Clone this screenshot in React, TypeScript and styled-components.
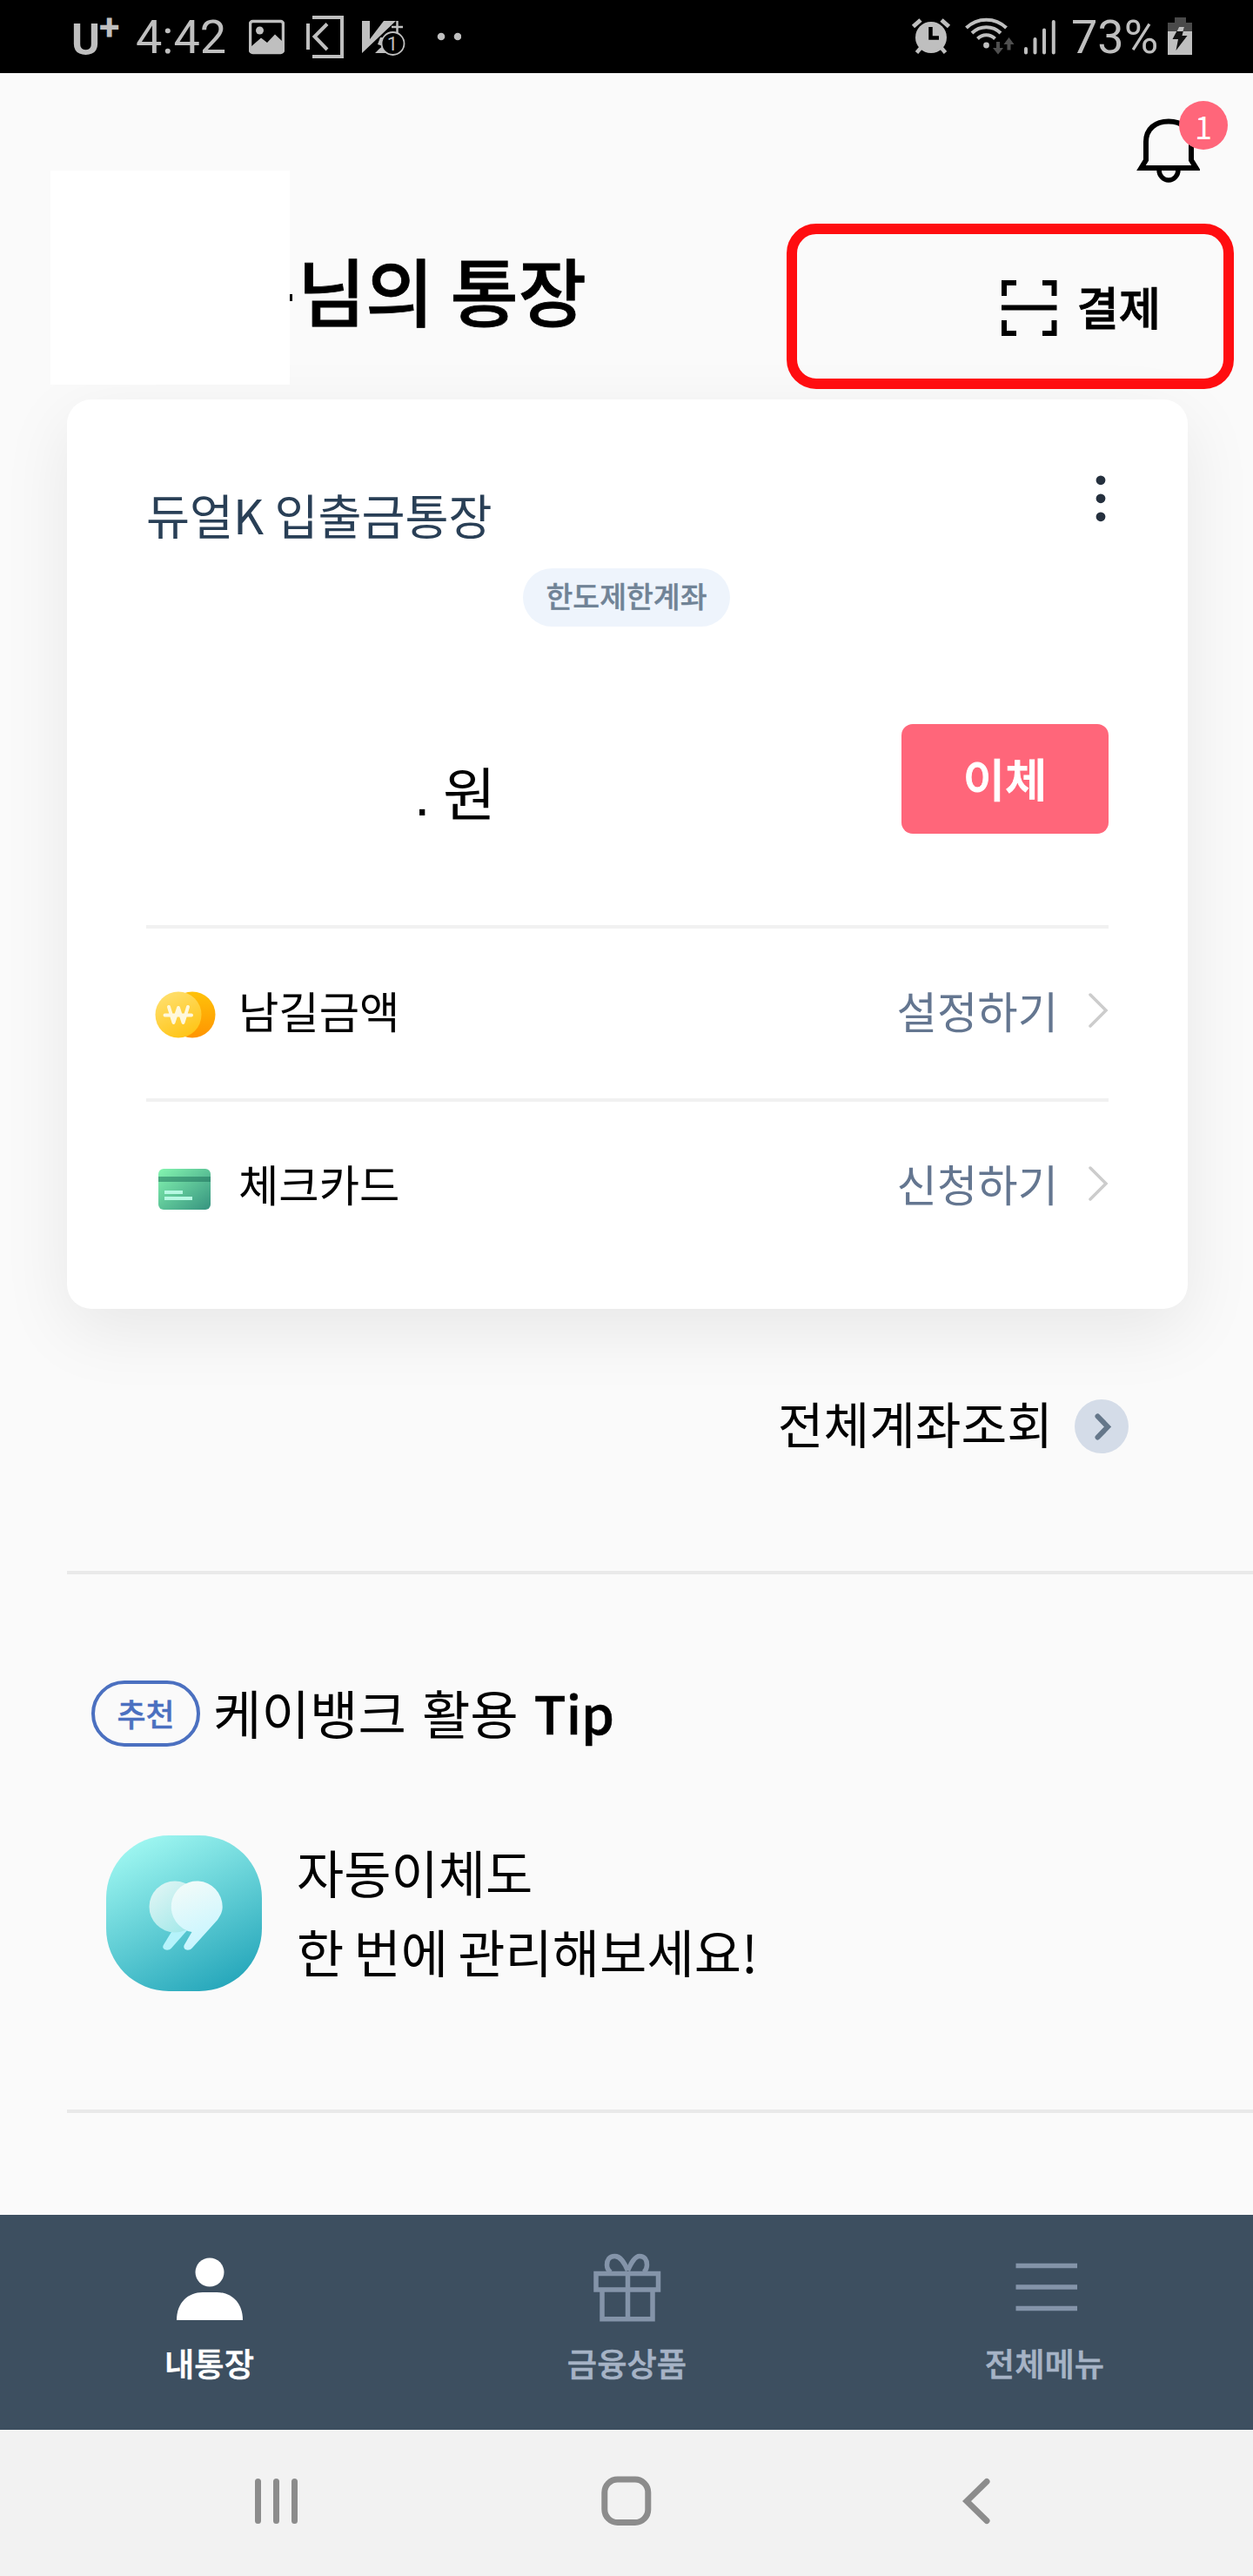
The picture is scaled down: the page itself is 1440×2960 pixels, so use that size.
import React from 'react';
import styled, { createGlobalStyle } from 'styled-components';

const GlobalStyle = createGlobalStyle`
  *, *::before, *::after { box-sizing: border-box; }
  body { margin: 0; background: #fafafa; }
  svg { display: block; flex: none; }
`;

const Screen = styled.div`
  display: flex;
  flex-direction: column;
  width: 1440px;
  height: 2960px;
  overflow: hidden;
  background: #fafafa;
  color: #000;
  font-family: 'Noto Sans CJK KR', 'Noto Sans', sans-serif;
  white-space: nowrap;
`;

/* ---------- Status bar ---------- */

const StatusBar = styled.header`
  display: flex;
  justify-content: space-between;
  height: 84px;
  flex: none;
  padding: 0 70px 0 85px;
  background: #000;
  color: #bfbfbf;
  font-family: Roboto, sans-serif;
`;

const StatusGroup = styled.div`
  display: flex;
  align-items: flex-start;
`;

const Carrier = styled.span`
  width: 74px;
  margin-left: -3px;
  font-size: 50px;
  font-weight: 700;
  line-height: 92px;
`;

const CarrierPlus = styled.sup`
  margin-left: -1px;
  font-size: 43px;
  line-height: 0;
  vertical-align: 17px;
`;

const StatusText = styled.span<{ $width: number }>`
  width: ${(p) => p.$width}px;
  font-size: 54px;
  line-height: 86px;
`;

const StatusIcon = styled.svg<{ $gap?: number }>`
  height: 84px;
  margin-left: ${(p) => p.$gap ?? 0}px;
`;

/* ---------- Header ---------- */

const Header = styled.section`
  position: relative;
  z-index: 1;
  flex: none;
  height: 375px;
`;

const AlertRow = styled.div`
  display: flex;
  justify-content: flex-end;
  height: 180px;
  padding: 52px 61px 0 0;
`;

const AlertButton = styled.button`
  position: relative;
  width: 73px;
  height: 75px;
  padding: 0;
  border: 0;
  background: none;
`;

const AlertCount = styled.span`
  position: absolute;
  top: -20px;
  left: 49px;
  width: 56px;
  height: 56px;
  border-radius: 50%;
  background: #ff667a;
  color: #fff;
  font: 400 36px/56px 'Noto Sans CJK KR', sans-serif;
  text-align: center;
`;

const TitleRow = styled.div`
  display: flex;
  justify-content: space-between;
  padding: 0 106px 0 333px;
`;

const OwnerTitle = styled.h1`
  display: flex;
  margin: 0;
  padding-top: 8px;
  font-size: 85px;
  font-weight: 500;
  line-height: 120px;
  -webkit-text-stroke: 0.8px currentColor;
`;

const NameEdge = styled.span`
  width: 3px;
  height: 8px;
  margin: 66px 6px 0 0;
  background: #000;
`;

const NameMask = styled.div`
  position: absolute;
  top: 112px;
  left: 58px;
  width: 275px;
  height: 246px;
  background: #fff;
`;

const PayButton = styled.button`
  display: flex;
  gap: 22px;
  padding: 58px 0 0;
  border: 0;
  background: none;
  color: #000;
  font: 500 52.5px/59px 'Noto Sans CJK KR', sans-serif;
  -webkit-text-stroke: 0.8px currentColor;
`;

const Highlight = styled.div`
  position: absolute;
  top: 173px;
  left: 904px;
  width: 514px;
  height: 190px;
  border: 12px solid #ff0d10;
  border-radius: 34px;
`;

/* ---------- Account card ---------- */

const AccountCard = styled.section`
  display: flex;
  flex-direction: column;
  flex: none;
  height: 1045px;
  margin: 0 75px 0 77px;
  padding: 87px 91px 0;
  border-radius: 28px;
  background: #fff;
  box-shadow: 0 24px 80px rgba(0, 0, 0, 0.08);
`;

const AccountTop = styled.div`
  display: flex;
  justify-content: space-between;
  height: 107px;
  padding: 0 3px 0 0;
`;

const AccountName = styled.h2`
  margin: 5px 0 0;
  color: #293f56;
  font-size: 54.4px;
  font-weight: 400;
  line-height: 80px;
`;

const LimitTag = styled.span`
  align-self: center;
  width: 238px;
  height: 67px;
  margin-right: 2px;
  border-radius: 34px;
  background: #eef4fc;
  color: #708396;
  font-size: 33.5px;
  font-weight: 500;
  line-height: 62px;
  text-align: center;
  -webkit-text-stroke: 0.4px currentColor;
`;

const BalanceRow = styled.div`
  display: flex;
  justify-content: space-between;
  height: 231px;
  margin-top: 112px;
`;

const Balance = styled.p`
  margin: 31px 0 0 308px;
  font-size: 66px;
  line-height: 90px;
`;

const Period = styled.span`
  display: inline-block;
  width: 33px;
  font-family: 'Liberation Sans', sans-serif;
`;

const TransferButton = styled.button`
  width: 238px;
  height: 126px;
  padding: 0 0 5px;
  border: 0;
  border-radius: 13px;
  background: #ff667a;
  color: #fff;
  font: 500 52.5px/60px 'Noto Sans CJK KR', sans-serif;
  -webkit-text-stroke: 1px currentColor;
`;

const ServiceRow = styled.div`
  display: flex;
  align-items: center;
  flex: none;
  height: 199px;
  border-top: 4px solid #f1f1f1;
`;

const ServiceIcon = styled.span`
  display: flex;
  width: 106px;
  padding: 2px 0 0 10px;
`;

const ServiceName = styled.span`
  flex: 1;
  padding-bottom: 8px;
  font-size: 50.4px;
  line-height: 80px;
`;

const ServiceAction = styled.span`
  display: flex;
  align-items: center;
  gap: 34px;
  padding-bottom: 8px;
  color: #647690;
  font-size: 50.4px;
  line-height: 80px;
`;

const AllAccounts = styled.div`
  display: flex;
  justify-content: flex-end;
  align-items: center;
  gap: 25px;
  flex: none;
  height: 301px;
  padding: 0 143px 31px 0;
  font-size: 57.3px;
  line-height: 80px;
`;

const AllAccountsLabel = styled.span`
  padding-bottom: 8px;
`;

/* ---------- Tip section ---------- */

const TipSection = styled.section`
  flex: none;
  height: 623px;
  margin-left: 77px;
  padding: 122px 0 0 28px;
  border: solid #e9e9e9;
  border-width: 4px 0;
`;

const TipHeading = styled.h3`
  display: flex;
  align-items: center;
  height: 76px;
  margin: 0;
  font-size: 60.3px;
  font-weight: 400;
  line-height: 76px;
`;

const TipTitle = styled.span`
  padding-bottom: 4px;
  word-spacing: 4.5px;
`;

const TipBadge = styled.span`
  width: 125px;
  height: 76px;
  margin-right: 15px;
  border: 4px solid #4b70c0;
  border-radius: 38px;
  color: #4b70c0;
  font-size: 36px;
  font-weight: 500;
  line-height: 66px;
  text-align: center;
  -webkit-text-stroke: 0.4px currentColor;
`;

const TipWord = styled.b`
  font-weight: 500;
  -webkit-text-stroke: 0.6px currentColor;
`;

const TipItem = styled.div`
  display: flex;
  gap: 40px;
  padding: 102px 0 0 17px;
`;

const TipText = styled.p`
  margin: -4px 0 0;
  font-size: 59px;
  line-height: 91px;
  word-spacing: -2px;
`;

const Rest = styled.div`
  flex: 1;
`;

/* ---------- Bottom bars ---------- */

const TabBar = styled.nav`
  display: grid;
  grid-template-columns: repeat(3, 1fr);
  flex: none;
  height: 247px;
  background: #3d4f60;
`;

const Tab = styled.div<{ $active?: boolean }>`
  display: flex;
  flex-direction: column;
  align-items: center;
  padding: 40px 0 0 1px;
  color: ${(p) => (p.$active ? '#fff' : '#a6b3c6')};
  font-size: 37.3px;
  font-weight: 500;
  line-height: 56px;
  -webkit-text-stroke: 0.6px currentColor;
`;

const TabLabel = styled.span`
  margin-top: 12px;
`;

const SystemBar = styled.footer`
  display: flex;
  justify-content: space-between;
  align-items: center;
  flex: none;
  height: 168px;
  padding: 0 302px 4px 292px;
  background: #f2f2f2;
`;

const HomeKey = styled.span`
  margin-right: 8px;
`;

function StatusLeft() {
  return (
    <StatusGroup>
      <Carrier>
        U<CarrierPlus>+</CarrierPlus>
      </Carrier>
      <StatusText $width={130}>4:42</StatusText>
      <StatusIcon width="41" viewBox="286 0 41 84">
        <rect x="287.5" y="24.5" width="38" height="36" rx="3" fill="none" stroke="#bfbfbf" strokeWidth="3.5" />
        <circle cx="298.500" cy="35" r="4.500" fill="#bfbfbf" />
        <path d="M288 54 L300 43.500 L307 49 L316 39.500 L325 48 V60 H288Z" fill="#bfbfbf" />
      </StatusIcon>
      <StatusIcon $gap={25} width="43" viewBox="352 0 43 84">
        <path d="M354 27V57M376 27.500L361.500 42L376 57M359 20H393V65H359" fill="none" stroke="#bfbfbf" strokeWidth="4" />
      </StatusIcon>
      <StatusIcon $gap={21} width="50" viewBox="416 0 50 84">
        <path d="M416 24H425V45L441 24H455L416 61Z" fill="#bfbfbf" />
        <path d="M437 43H444V61H431L436 56L440 53L434 51Z" fill="#bfbfbf" />
        <path d="M456.500 24V38M450 31H463" stroke="#bfbfbf" strokeWidth="2.500" />
        <circle cx="451.500" cy="50" r="13" fill="#000" stroke="#bfbfbf" strokeWidth="1.800" />
        <text x="451" y="57.500" fontSize="22" textAnchor="middle" fill="#bfbfbf">1</text>
      </StatusIcon>
      <StatusIcon $gap={36} width="28" viewBox="502 0 28 84">
        <circle cx="507" cy="42" r="4.300" fill="#bfbfbf" />
        <circle cx="526" cy="42" r="4.300" fill="#bfbfbf" />
      </StatusIcon>
    </StatusGroup>
  );
}

function StatusRight() {
  return (
    <StatusGroup>
      <StatusIcon width="46" viewBox="1047 0 46 84">
        <path d="M1049.500 30.500L1058 23M1090.500 30.500L1082 23" stroke="#bfbfbf" strokeWidth="5" />
        <path d="M1053.500 60.500L1059 54M1086.500 60.500L1081 54" stroke="#bfbfbf" strokeWidth="4.500" />
        <circle cx="1070" cy="43" r="18" fill="#bfbfbf" />
        <path d="M1069.500 31V43.500H1079" fill="none" stroke="#000" strokeWidth="4.500" />
      </StatusIcon>
      <StatusIcon $gap={16} width="57" viewBox="1109 0 57 84">
        <g fill="none" stroke="#bfbfbf" strokeWidth="4">
          <path d="M1110.500 32A33 33 0 0 1 1156.500 32" />
          <path d="M1117 38A23.500 23.500 0 0 1 1150 38" />
          <path d="M1123.500 44.500A14 14 0 0 1 1143.500 44.500" />
        </g>
        <circle cx="1133.500" cy="52" r="3.400" fill="#bfbfbf" />
        <g fill="#4f4f4f">
          <path d="M1145 48H1149V55H1153L1147 62.500L1141 55H1145Z" />
          <path d="M1157.500 57.500H1161.500V51H1165.500L1159.500 43L1153.500 51H1157.500Z" />
        </g>
      </StatusIcon>
      <StatusIcon $gap={11} width="37" viewBox="1177 0 37 84">
        <path d="M1179 56V60.500M1189.500 45V60.500M1200 34.500V60.500M1210.800 25V60.500" stroke="#bfbfbf" strokeWidth="4" strokeLinecap="round" />
      </StatusIcon>
      <StatusIcon as="span" $gap={17} />
      <StatusText $width={111}>73%</StatusText>
      <StatusIcon width="28" viewBox="1342 0 28 84">
        <path d="M1350 20H1363V26H1370V36H1342V26H1350Z" fill="#4a4a4a" />
        <path d="M1342 36H1370V63H1342Z" fill="#bfbfbf" />
        <path d="M1355 31H1361L1358.500 41H1364.500L1351.500 58L1354 45H1347.500Z" fill="#111" />
        <path d="M1355 31H1361L1359.500 36H1352.500Z" fill="#bfbfbf" />
      </StatusIcon>
    </StatusGroup>
  );
}

function BellIcon() {
  return (
    <svg width="73" height="75" viewBox="1306 136 73 75" fill="none" stroke="#000" strokeWidth="6">
      <path d="M1317 163C1317 148 1328 139.500 1343 139.500S1369 148 1369 163V184L1374.500 193H1311.500L1317 184Z" />
      <path d="M1332 195A11 12 0 0 0 1354 195" strokeWidth="5.500" />
    </svg>
  );
}

function ScanIcon() {
  return (
    <svg width="64" height="64" viewBox="0 0 64 64" fill="none" stroke="#000" strokeWidth="6">
      <path d="M17 3H3V18M47 3H60.500V18M17 61H3V46M47 61H60.500V46M0 31.500H63.500" />
    </svg>
  );
}

function MoreIcon() {
  return (
    <svg width="12" height="54" viewBox="0 0 12 54" fill="#25303e">
      <circle cx="6" cy="5.800" r="5.400" />
      <circle cx="6" cy="26.800" r="5.400" />
      <circle cx="6" cy="47.800" r="5.400" />
    </svg>
  );
}

function CoinIcon() {
  return (
    <svg width="70" height="54" viewBox="0 0 70 54">
      <defs>
        <linearGradient id="coinBack" x1="0" y1="0" x2="0" y2="1">
          <stop offset="0" stopColor="#ffc20a" />
          <stop offset="1" stopColor="#ff9400" />
        </linearGradient>
        <linearGradient id="coinFront" x1="0.2" y1="0" x2="0.7" y2="1">
          <stop offset="0" stopColor="#ffe070" />
          <stop offset="1" stopColor="#ffc414" />
        </linearGradient>
      </defs>
      <circle cx="43" cy="27" r="26.500" fill="url(#coinBack)" />
      <circle cx="27" cy="27" r="26.500" fill="url(#coinFront)" />
      <path d="M16 18L21.500 36L27 19L32.500 36L38 18M11.500 27.500H42" fill="none" stroke="#fff8dc" strokeWidth="4" strokeLinecap="round" strokeLinejoin="round" />
    </svg>
  );
}

function CardIcon() {
  return (
    <svg width="70" height="54" viewBox="0 0 70 54">
      <defs>
        <linearGradient id="cardFace" x1="0" y1="0" x2="1" y2="1">
          <stop offset="0" stopColor="#84f5b0" />
          <stop offset="1" stopColor="#36937f" />
        </linearGradient>
      </defs>
      <rect x="4" y="5" width="60" height="47" rx="6" fill="url(#cardFace)" />
      <path d="M4 14H64V20H4Z" fill="#176a55" fillOpacity="0.5" />
      <path d="M11 32H32M11 39H43" stroke="#b5f8e2" strokeWidth="3.800" />
    </svg>
  );
}

function ChevronIcon() {
  return (
    <svg width="24" height="42" viewBox="0 0 24 42" fill="none" stroke="#ccc" strokeWidth="3.500" strokeLinecap="round">
      <path d="M3 3L21 21L3 39" />
    </svg>
  );
}

function RoundChevronIcon() {
  return (
    <svg width="62" height="62" viewBox="0 0 62 62">
      <circle cx="31" cy="31" r="31" fill="#d4dce8" />
      <path d="M26.500 19.500L38 31.500L26.500 43.500" fill="none" stroke="#65778a" strokeWidth="6" strokeLinecap="round" />
    </svg>
  );
}

function QuoteAppIcon() {
  return (
    <svg width="179" height="179" viewBox="0 0 179 179">
      <defs>
        <linearGradient id="appFace" x1="0.25" y1="0" x2="0.75" y2="1">
          <stop offset="0" stopColor="#9ff7f1" />
          <stop offset="1" stopColor="#25a6ba" />
        </linearGradient>
        <linearGradient id="quoteBack" x1="0" y1="0" x2="0.8" y2="1">
          <stop offset="0" stopColor="#e6f7f6" />
          <stop offset="1" stopColor="#9fe7e8" />
        </linearGradient>
        <linearGradient id="quoteFront" x1="0.3" y1="0" x2="0.6" y2="1">
          <stop offset="0" stopColor="#f2fbf9" />
          <stop offset="1" stopColor="#c4f5ff" />
        </linearGradient>
      </defs>
      <rect width="179" height="179" rx="72" fill="url(#appFace)" />
      <path d="M75 111L65.800 126C63 131 71 134 75 129.500L94 108Z" fill="#b5f3fb" />
      <circle cx="79" cy="82" r="29.500" fill="url(#quoteBack)" />
      <path d="M98.500 111L90 125.500C87 131 94.500 134 98.700 129.500L128 97C132 91 133.700 87 133.700 82A29.500 29.500 0 1 0 98.500 111Z" fill="url(#quoteFront)" />
    </svg>
  );
}

function PersonIcon() {
  return (
    <svg width="80" height="90" viewBox="200 2585 80 90" fill="#fff">
      <circle cx="240" cy="2611" r="16.500" />
      <path d="M202 2666C202 2646 215 2634 232 2634H248C265 2634 278 2646 278 2666Z" />
    </svg>
  );
}

function GiftIcon() {
  return (
    <svg width="80" height="90" viewBox="681 2585 80 90" fill="none" stroke="#8494a9" strokeWidth="5.500">
      <path d="M685 2612.500H756.500V2631H685ZM692 2633V2664.800H750V2633M721.500 2610V2664" />
      <path d="M721.500 2609C717 2599 713 2592.500 706.500 2592.500C700 2592.500 697.500 2597 697.500 2602.500C697.500 2606 699 2609 702 2611" />
      <path d="M721.500 2609C726 2599 730 2592.500 735 2592.500C741 2592.500 743.500 2597 743.500 2602.500C743.500 2606 742 2609 740 2611" />
    </svg>
  );
}

function MenuIcon() {
  return (
    <svg width="80" height="90" viewBox="0 0 80 90" stroke="#8494a9" strokeWidth="5.500">
      <path d="M6.500 18.500H77M6.500 43H77M6.500 67.500H77" />
    </svg>
  );
}

const services = [
  { name: '남길금액', action: '설정하기', icon: <CoinIcon /> },
  { name: '체크카드', action: '신청하기', icon: <CardIcon /> },
];

const tabs = [
  { label: '내통장', icon: <PersonIcon />, active: true },
  { label: '금융상품', icon: <GiftIcon /> },
  { label: '전체메뉴', icon: <MenuIcon /> },
];

export default function App() {
  return (
    <Screen>
      <GlobalStyle />
      <StatusBar>
        <StatusLeft />
        <StatusRight />
      </StatusBar>

      <Header>
        <AlertRow>
          <AlertButton>
            <BellIcon />
            <AlertCount>1</AlertCount>
          </AlertButton>
        </AlertRow>
        <TitleRow>
          <OwnerTitle>
            <NameEdge />
            님의 통장
          </OwnerTitle>
          <PayButton>
            <ScanIcon />
            결제
          </PayButton>
        </TitleRow>
        <NameMask />
        <Highlight />
      </Header>

      <AccountCard>
        <AccountTop>
          <AccountName>듀얼K 입출금통장</AccountName>
          <MoreIcon />
        </AccountTop>
        <LimitTag>한도제한계좌</LimitTag>
        <BalanceRow>
          <Balance>
            <Period>.</Period>원
          </Balance>
          <TransferButton>이체</TransferButton>
        </BalanceRow>
        {services.map((s) => (
          <ServiceRow key={s.name}>
            <ServiceIcon>{s.icon}</ServiceIcon>
            <ServiceName>{s.name}</ServiceName>
            <ServiceAction>
              {s.action}
              <ChevronIcon />
            </ServiceAction>
          </ServiceRow>
        ))}
      </AccountCard>

      <AllAccounts>
        <AllAccountsLabel>전체계좌조회</AllAccountsLabel>
        <RoundChevronIcon />
      </AllAccounts>

      <TipSection>
        <TipHeading>
          <TipBadge>추천</TipBadge>
          <TipTitle>
            케이뱅크 활용 <TipWord>Tip</TipWord>
          </TipTitle>
        </TipHeading>
        <TipItem>
          <QuoteAppIcon />
          <TipText>
            자동이체도
            <br />한 번에 관리해보세요!
          </TipText>
        </TipItem>
      </TipSection>
      <Rest />

      <TabBar>
        {tabs.map((t) => (
          <Tab key={t.label} $active={t.active}>
            {t.icon}
            <TabLabel>{t.label}</TabLabel>
          </Tab>
        ))}
      </TabBar>

      <SystemBar>
        <svg width="50" height="54" viewBox="0 0 50 54" stroke="#8c8c8c" strokeWidth="7" strokeLinecap="round">
          <path d="M4.500 4.500V49.500M25.500 4.500V49.500M46.500 4.500V49.500" />
        </svg>
        <HomeKey>
          <svg width="58" height="58" viewBox="0 0 58 58" fill="none" stroke="#8c8c8c" strokeWidth="7">
            <rect x="3.800" y="4" width="50" height="49.500" rx="15" />
          </svg>
        </HomeKey>
        <svg width="32" height="54" viewBox="0 0 32 54" fill="none" stroke="#8c8c8c" strokeWidth="7" strokeLinecap="round">
          <path d="M28 4.500L5 27L28 49.500" />
        </svg>
      </SystemBar>
    </Screen>
  );
}
